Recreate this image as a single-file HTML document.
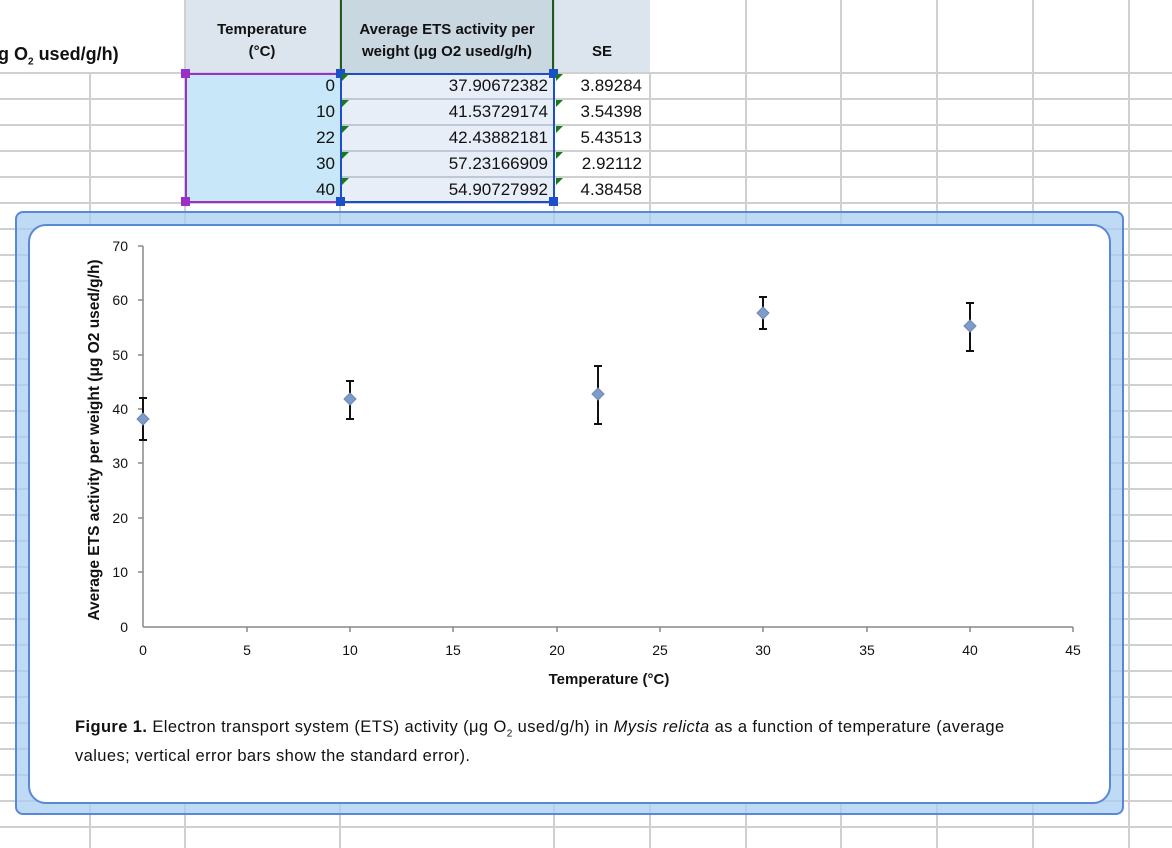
<!DOCTYPE html>
<html style="height:848px;overflow:hidden"><head><meta charset="utf-8"><style>
body{margin:0;width:1172px;height:848px;overflow:hidden;background:#fff;font-family:"Liberation Sans",sans-serif;position:relative}
.a{position:absolute}
.vl{position:absolute;top:0;height:848px;width:2px;background:#d0d0d0}
.hl{position:absolute;left:0;width:1172px;height:2px;background:#d0d0d0}
.num{position:absolute;font-size:17px;color:#111;text-align:right}
.hd{position:absolute;font-weight:bold;font-size:15px;text-align:center;color:#111;line-height:22px}
.tri{position:absolute;width:0;height:0;border-top:7px solid #1a7a1a;border-right:7px solid transparent}
.h{position:absolute;width:9px;height:9px}
</style></head><body>
<div class="a" style="left:184px;top:0;width:466px;height:72px;background:#dce5ee"></div>
<div class="a" style="left:340px;top:0;width:214px;height:72px;background:#c9d7e0"></div>
<div class="vl" style="left:89px;top:72px;height:776px"></div>
<div class="vl" style="left:184px"></div>
<div class="vl" style="left:339px"></div>
<div class="vl" style="left:553px"></div>
<div class="vl" style="left:649px;top:72px;height:776px"></div>
<div class="vl" style="left:745px"></div>
<div class="vl" style="left:840px"></div>
<div class="vl" style="left:936px"></div>
<div class="vl" style="left:1032px"></div>
<div class="vl" style="left:1128px"></div>
<div class="hl" style="top:72px"></div><div class="hl" style="top:98px"></div><div class="hl" style="top:124px"></div><div class="hl" style="top:150px"></div><div class="hl" style="top:176px"></div><div class="hl" style="top:202px"></div><div class="hl" style="top:228px"></div>
<div class="hl" style="top:254px"></div><div class="hl" style="top:280px"></div><div class="hl" style="top:306px"></div><div class="hl" style="top:332px"></div><div class="hl" style="top:358px"></div><div class="hl" style="top:384px"></div><div class="hl" style="top:410px"></div><div class="hl" style="top:436px"></div><div class="hl" style="top:462px"></div><div class="hl" style="top:488px"></div><div class="hl" style="top:514px"></div><div class="hl" style="top:540px"></div><div class="hl" style="top:566px"></div><div class="hl" style="top:592px"></div><div class="hl" style="top:618px"></div><div class="hl" style="top:644px"></div><div class="hl" style="top:670px"></div><div class="hl" style="top:696px"></div><div class="hl" style="top:722px"></div><div class="hl" style="top:748px"></div><div class="hl" style="top:774px"></div><div class="hl" style="top:800px"></div><div class="hl" style="top:826px"></div>
<div class="a" style="left:-2px;top:44px;font-weight:bold;font-size:18px;color:#111">g O<sub style="font-size:10px">2</sub> used/g/h)</div>
<div class="hd" style="left:184px;top:19px;width:156px">Temperature<br>(°C)</div>
<div class="hd" style="left:340px;top:19px;width:214px">Average ETS activity per<br>weight (μg O2 used/g/h)</div>
<div class="hd" style="left:554px;top:41px;width:96px">SE</div>
<div class="a" style="left:185px;top:73px;width:157px;height:130px;background:#c8e7f8;border:2px solid #9b30c8;box-sizing:border-box"></div>
<div class="a" style="left:340px;top:73px;width:215px;height:130px;background:#e8eef8;border:2px solid #1a4fc8;box-sizing:border-box"></div>
<div class="a" style="left:340px;top:0;width:214px;height:73px;border-left:2px solid #1f5a1f;border-right:2px solid #1f5a1f;box-sizing:border-box"></div>
<div class="hl" style="top:98px;left:342px;width:211px;background:#c0c8d8"></div><div class="hl" style="top:124px;left:342px;width:211px;background:#c0c8d8"></div><div class="hl" style="top:150px;left:342px;width:211px;background:#c0c8d8"></div><div class="hl" style="top:176px;left:342px;width:211px;background:#c0c8d8"></div>
<div class="h" style="left:181px;top:69px;background:#9b30c8"></div><div class="h" style="left:181px;top:197px;background:#9b30c8"></div>
<div class="h" style="left:336px;top:69px;background:#1a4fc8"></div><div class="h" style="left:336px;top:197px;background:#1a4fc8"></div>
<div class="h" style="left:549px;top:69px;background:#1a4fc8"></div><div class="h" style="left:549px;top:197px;background:#1a4fc8"></div>
<div class="num" style="left:280px;top:76px;width:55px">0</div><div class="num" style="left:280px;top:102px;width:55px">10</div><div class="num" style="left:280px;top:128px;width:55px">22</div><div class="num" style="left:280px;top:154px;width:55px">30</div><div class="num" style="left:280px;top:180px;width:55px">40</div>
<div class="num" style="left:400px;top:76px;width:148px">37.90672382</div><div class="num" style="left:400px;top:102px;width:148px">41.53729174</div><div class="num" style="left:400px;top:128px;width:148px">42.43882181</div><div class="num" style="left:400px;top:154px;width:148px">57.23166909</div><div class="num" style="left:400px;top:180px;width:148px">54.90727992</div>
<div class="num" style="left:560px;top:76px;width:82px">3.89284</div><div class="num" style="left:560px;top:102px;width:82px">3.54398</div><div class="num" style="left:560px;top:128px;width:82px">5.43513</div><div class="num" style="left:560px;top:154px;width:82px">2.92112</div><div class="num" style="left:560px;top:180px;width:82px">4.38458</div>
<div class="tri" style="left:342px;top:74px"></div><div class="tri" style="left:342px;top:100px"></div><div class="tri" style="left:342px;top:126px"></div><div class="tri" style="left:342px;top:152px"></div><div class="tri" style="left:342px;top:178px"></div>
<div class="tri" style="left:556px;top:74px"></div><div class="tri" style="left:556px;top:100px"></div><div class="tri" style="left:556px;top:126px"></div><div class="tri" style="left:556px;top:152px"></div><div class="tri" style="left:556px;top:178px"></div>
<div class="a" style="left:15px;top:211px;width:1109px;height:604px;background:rgba(170,205,240,0.75);border:2px solid #5a88d8;border-radius:8px;box-sizing:border-box"></div>
<div class="a" style="left:28px;top:224px;width:1083px;height:580px;background:#fff;border:2px solid #5a88d8;border-radius:18px;box-sizing:border-box"></div>
<svg class="a" style="left:0;top:0" width="1172" height="848">
<g stroke="#888" stroke-width="1.5" fill="none">
<line x1="143" y1="246" x2="143" y2="627"/><line x1="143" y1="627" x2="1073" y2="627"/>
<line x1="138" y1="246" x2="143" y2="246"/><line x1="138" y1="300" x2="143" y2="300"/><line x1="138" y1="355" x2="143" y2="355"/><line x1="138" y1="409" x2="143" y2="409"/><line x1="138" y1="463" x2="143" y2="463"/><line x1="138" y1="518" x2="143" y2="518"/><line x1="138" y1="572" x2="143" y2="572"/>
<line x1="247" y1="627" x2="247" y2="632"/><line x1="350" y1="627" x2="350" y2="632"/><line x1="453" y1="627" x2="453" y2="632"/><line x1="557" y1="627" x2="557" y2="632"/><line x1="660" y1="627" x2="660" y2="632"/><line x1="763" y1="627" x2="763" y2="632"/><line x1="867" y1="627" x2="867" y2="632"/><line x1="970" y1="627" x2="970" y2="632"/><line x1="1073" y1="627" x2="1073" y2="632"/>
</g>
<g font-family="Liberation Sans" font-size="14" fill="#111" text-anchor="end">
<text x="128" y="251">70</text><text x="128" y="305">60</text><text x="128" y="360">50</text><text x="128" y="414">40</text><text x="128" y="468">30</text><text x="128" y="523">20</text><text x="128" y="577">10</text><text x="128" y="632">0</text>
</g>
<g font-family="Liberation Sans" font-size="14" fill="#111" text-anchor="middle">
<text x="143" y="655">0</text><text x="247" y="655">5</text><text x="350" y="655">10</text><text x="453" y="655">15</text><text x="557" y="655">20</text><text x="660" y="655">25</text><text x="763" y="655">30</text><text x="867" y="655">35</text><text x="970" y="655">40</text><text x="1073" y="655">45</text>
<text x="609" y="684" font-weight="bold" font-size="15">Temperature (°C)</text>
<text transform="translate(99,440) rotate(-90)" font-weight="bold" font-size="15.5">Average ETS activity per weight (μg O2 used/g/h)</text>
</g>
<g stroke="#111" stroke-width="2" fill="none">
<path d="M143 398V440M139 398H147M139 440H147"/>
<path d="M350 381V419M346 381H354M346 419H354"/>
<path d="M598 366V424M594 366H602M594 424H602"/>
<path d="M763 297V329M759 297H767M759 329H767"/>
<path d="M970 303V351M966 303H974M966 351H974"/>
</g>
<g fill="#7f9cc8" stroke="#6c88b8">
<path d="M143 413l6 6-6 6-6-6z"/><path d="M350 393l6 6-6 6-6-6z"/><path d="M598 388l6 6-6 6-6-6z"/><path d="M763 307l6 6-6 6-6-6z"/><path d="M970 320l6 6-6 6-6-6z"/>
</g>
</svg>
<div class="a" style="left:75px;top:716px;white-space:nowrap;font-size:16.5px;letter-spacing:0.4px;line-height:22px;color:#111"><b>Figure 1.</b> Electron transport system (ETS) activity (μg O<sub style="font-size:10px">2</sub> used/g/h) in <i>Mysis relicta</i> as a function of temperature (average<br>values; vertical error bars show the standard error).</div>
</body></html>
